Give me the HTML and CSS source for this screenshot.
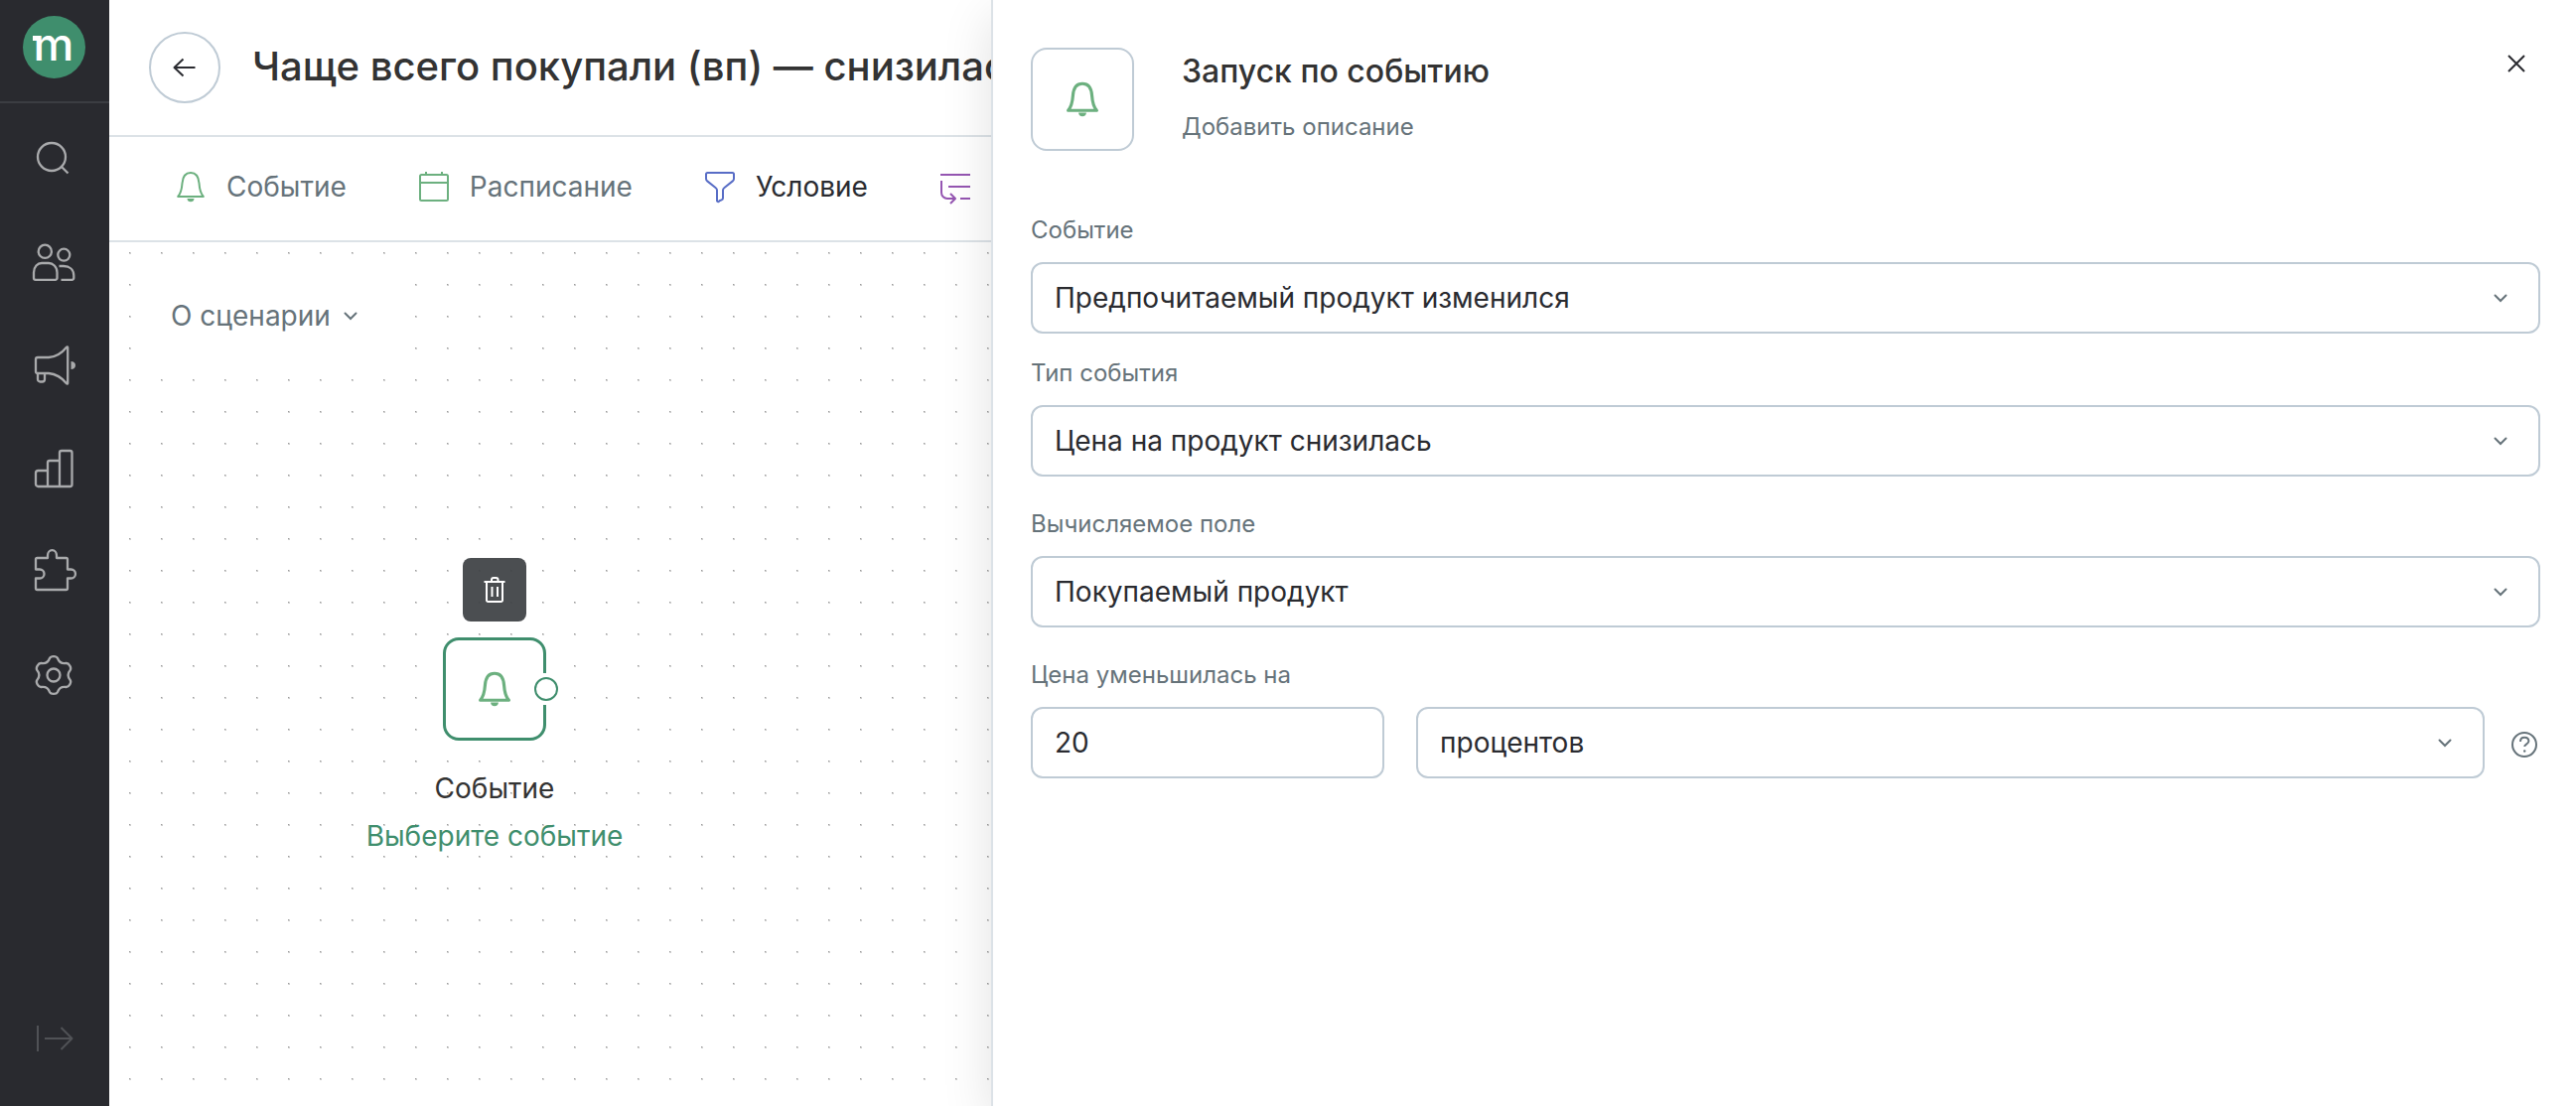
FILE: index.html
```html
<!DOCTYPE html>
<html lang="ru">
<head>
  <meta charset="utf-8">
  <meta name="viewport" content="width=device-width, initial-scale=1">
  <title>Редактор сценария</title>
  <link rel="stylesheet" href="styles.css">
</head>
<body>
  <svg class="sprite" aria-hidden="true">
    <symbol id="bell" viewBox="0 0 32 32">
      <path d="M3.200 26C5.800 23 7 20 7.500 12.500C8 6 11 2 16 2S24 6 24.500 12.500C25 20 26.200 23 28.800 26Z" fill="none" stroke="currentColor" stroke-linejoin="round"/>
      <path d="M12.500 28h7c0 2-1.500 3.300-3.500 3.300S12.500 30 12.500 28Z" fill="currentColor" stroke="none"/>
    </symbol>
    <symbol id="chevron" viewBox="0 0 24 24">
      <path d="M6.500 9.500 12 15l5.500-5.500" fill="none" stroke="currentColor" stroke-width="2" stroke-linecap="round"/>
    </symbol>
  </svg>

  <div class="app">
    <nav class="sidebar" aria-label="Разделы">
      <a class="brand" href="#" aria-label="Главная"><span class="logo">m</span></a>
      <div class="menu">
        <a class="menu-item" href="#" aria-label="Поиск">
          <svg class="menu-icon" viewBox="0 0 48 48"><circle cx="21" cy="22" r="14"/><path d="m31 32 6.500 6.500"/></svg>
        </a>
        <a class="menu-item" href="#" aria-label="Клиенты">
          <svg class="menu-icon" viewBox="0 0 48 48"><circle cx="14.300" cy="13.300" r="6.600"/><path d="M3 34.500C3 28.500 7 25 11 25h7c4 0 8.500 3.500 8.500 9.500V40a1.800 1.800 0 0 1-1.800 1.800H4.800A1.800 1.800 0 0 1 3 40Z"/><circle cx="33.300" cy="16.700" r="6"/><path d="M28.500 28h4.500c6 0 10.300 3.500 10.300 9.500V40a1.800 1.800 0 0 1-1.800 1.800H30.500"/></svg>
        </a>
        <a class="menu-item" href="#" aria-label="Кампании">
          <svg class="menu-icon" viewBox="0 0 48 48"><path d="M7 16h11c6-.5 13-4 18-10.300.6-.7 1.200-.3 1.200.3v36c0 .6-.6 1-1.200.3C31 36 24 32.500 18 32H7a2 2 0 0 1-2-2V18a2 2 0 0 1 2-2Z"/><path d="M7 32.500V38a2.500 2.500 0 0 0 2.500 2.500h2A2.500 2.500 0 0 0 14 38v-5.500"/><path class="solid" d="M40.500 20c2.500 0 4.500 1.500 4.500 4s-2 4-4.500 4Z"/></svg>
        </a>
        <a class="menu-item" href="#" aria-label="Отчеты">
          <svg class="menu-icon" viewBox="0 0 48 48"><path d="M17 42V18a2 2 0 0 1 2-2h10M29 42V8a2 2 0 0 1 2-2h8.500a2 2 0 0 1 2 2v32a2 2 0 0 1-2 2H7.500A2.500 2.500 0 0 1 5 39.500V28.500A2.500 2.500 0 0 1 7.500 26H17"/></svg>
        </a>
        <a class="menu-item" href="#" aria-label="Интеграции">
          <svg class="menu-icon" viewBox="0 0 48 48"><path d="M6.500 10H17V7.500a4 4.800 0 0 1 9 0V10h9.500A1.500 1.500 0 0 1 37 11.500V21.500h3.500a4.500 4.500 0 0 1 0 9H37v10a1.500 1.500 0 0 1-1.500 1.500h-29A1.500 1.500 0 0 1 5 40.500V30.500h4a4.500 4.500 0 0 0 0-9H5v-10A1.500 1.500 0 0 1 6.500 10Z"/></svg>
        </a>
        <a class="menu-item" href="#" aria-label="Настройки">
          <svg class="menu-icon" viewBox="0 0 48 48"><g transform="translate(23 24)"><circle r="6.500"/><path d="M-4-17C-2.800-19.500 2.800-19.500 4-17Q6.250-10.800 12.700-12C15.500-12.200 18.300-7.300 16.700-5Q12.500 0 16.700 5C18.300 7.300 15.500 12.200 12.700 12Q6.250 10.800 4 17C2.800 19.500-2.800 19.500-4 17Q-6.250 10.800-12.700 12C-15.500 12.200-18.300 7.300-16.700 5Q-12.500 0-16.700-5C-18.300-7.300-15.500-12.200-12.700-12Q-6.250-10.800-4-17Z"/></g></svg>
        </a>
      </div>
      <button class="expand" type="button" aria-label="Развернуть меню">
        <svg class="menu-icon" viewBox="0 0 48 48"><path d="M7 11v26M14 24h27M30.500 13 41.500 24l-11 11"/></svg>
      </button>
    </nav>

    <div class="workspace">
      <main class="editor">
        <header class="topbar">
          <button class="back" type="button" aria-label="Назад">
            <svg class="icon" viewBox="0 0 32 32"><path d="M26.500 16H5.500M14.500 7.500 5.500 16l9 8.500"/></svg>
          </button>
          <h1 class="title">Чаще всего покупали (вп) — снизилась</h1>
        </header>

        <div class="toolbar">
          <button class="tool" type="button"><svg class="icon green"><use href="#bell"/></svg>Событие</button>
          <button class="tool" type="button"><svg class="icon green" viewBox="0 0 32 32"><rect x="2" y="4" width="28" height="26" rx="1.500"/><path d="M2 12h28M8 1v3M24 1v3"/></svg>Расписание</button>
          <button class="tool active" type="button"><svg class="icon blue" viewBox="0 0 32 32"><path d="M3.500 2h25A1.500 1.500 0 0 1 30 3.500V8a3 3 0 0 1-1.200 2.400l-8.600 6.800A3 3 0 0 0 19 19.600V27.500a2 2 0 0 1-1.300 1.900l-2.300.9A1.200 1.200 0 0 1 13 29.500V19.600a3 3 0 0 0-1.200-2.400L3.200 10.400A3 3 0 0 1 2 8V3.500A1.500 1.500 0 0 1 3.500 2Z"/></svg>Условие</button>
          <button class="tool" type="button" aria-label="Ветвление"><svg class="icon purple" viewBox="0 0 32 32"><path d="M1 4h30M9 16h22M21 28h10M2 10v12a6 6 0 0 0 6 6h8M11 23l5 5-5 5"/></svg></button>
        </div>

        <section class="canvas" aria-label="Схема сценария">
          <button class="about" type="button">О сценарии<svg class="chevron"><use href="#chevron"/></svg></button>

          <div class="node">
            <button class="node-delete" type="button" aria-label="Удалить">
              <svg class="icon" viewBox="0 0 32 32"><path d="M5.500 8h21M13 8V6a2 2 0 0 1 2-2h2.500a2 2 0 0 1 2 2v2M8 8v18.500A1.500 1.500 0 0 0 9.500 28h13a1.500 1.500 0 0 0 1.500-1.500V8M13.500 13v10M19 13v10"/></svg>
            </button>
            <div class="node-box">
              <svg class="bell-large"><use href="#bell"/></svg>
              <span class="port"></span>
            </div>
            <div class="node-caption">
              <span class="node-name">Событие</span>
              <a class="node-link" href="#">Выберите событие</a>
            </div>
          </div>
        </section>
      </main>

      <aside class="panel">
        <header class="panel-head">
          <div class="panel-badge"><svg class="bell-large"><use href="#bell"/></svg></div>
          <div class="panel-heading">
            <h2 class="panel-title">Запуск по событию</h2>
            <button class="describe" type="button">Добавить описание</button>
          </div>
          <button class="close" type="button" aria-label="Закрыть">
            <svg class="icon" viewBox="0 0 32 32"><path d="m8 8 16 16M24 8 8 24"/></svg>
          </button>
        </header>

        <form class="form">
          <div class="group">
            <div class="field">
              <label class="label" for="event">Событие</label>
              <div class="select">
                <select class="control" id="event"><option>Предпочитаемый продукт изменился</option></select>
                <svg class="chevron"><use href="#chevron"/></svg>
              </div>
            </div>
            <div class="field">
              <label class="label" for="type">Тип события</label>
              <div class="select">
                <select class="control" id="type"><option>Цена на продукт снизилась</option></select>
                <svg class="chevron"><use href="#chevron"/></svg>
              </div>
            </div>
          </div>
          <div class="field">
            <label class="label" for="computed">Вычисляемое поле</label>
            <div class="select">
              <select class="control" id="computed"><option>Покупаемый продукт</option></select>
              <svg class="chevron"><use href="#chevron"/></svg>
            </div>
          </div>
          <div class="field">
            <label class="label" for="amount">Цена уменьшилась на</label>
            <div class="amount-row">
              <input class="control amount" id="amount" type="text" inputmode="numeric" value="20">
              <div class="unit">
                <div class="select">
                  <select class="control" aria-label="Единица измерения"><option>процентов</option></select>
                  <svg class="chevron"><use href="#chevron"/></svg>
                </div>
                <button class="help" type="button" aria-label="Справка">
                  <svg class="icon" viewBox="0 0 32 32"><circle cx="16" cy="18" r="12"/><path d="M12 15c0-2.500 1.800-4.200 4.200-4.200s4.200 1.500 4.200 3.800c0 2.800-4.200 2.600-4.200 5.400"/><circle class="solid" cx="16.200" cy="24.500" r="1.200"/></svg>
                </button>
              </div>
            </div>
          </div>
        </form>
      </aside>
    </div>
  </div>
</body>
</html>
```
FILE: styles.css
```css
:root {
  --ink: #2a2b30;
  --heading: #333333;
  --muted: #66737a;
  --line: #dce2e7;
  --border: #bfcbd5;
  --brand: #3f8e6d;
  --green: #6cb07f;
  --rail: #292a2f;
}

* {
  box-sizing: border-box;
}

body {
  margin: 0;
  font-family: Inter, "Liberation Sans", sans-serif;
  font-size: 28px;
  line-height: 40px;
  color: var(--ink);
  background: #fff;
}

button,
input,
select {
  font: inherit;
  color: inherit;
}

button {
  padding: 0;
  border: 0;
  background: none;
  cursor: pointer;
}

a {
  text-decoration: none;
}

h1,
h2 {
  margin: 0;
  font-weight: 500;
  color: var(--heading);
}

svg {
  display: block;
  flex: none;
}

.sprite {
  position: absolute;
  width: 0;
  height: 0;
}

.icon,
.menu-icon {
  width: 32px;
  height: 32px;
  fill: none;
  stroke: currentColor;
  stroke-width: 2;
  stroke-linecap: butt;
  stroke-linejoin: round;
  overflow: visible;
}

.menu-icon {
  width: 48px;
  height: 48px;
}

.menu .menu-icon {
  stroke-width: 2.3;
}

.solid {
  fill: currentColor;
  stroke: none;
}

.green {
  color: var(--green);
}

.blue {
  color: #586dc6;
}

.purple {
  color: #9556b2;
}

.chevron {
  width: 24px;
  height: 24px;
  color: var(--muted);
}

.bell-large {
  width: 36px;
  height: 36px;
  color: var(--green);
  stroke-width: 2.8;
}

.app {
  display: flex;
  min-height: 100vh;
}

/* Sidebar */

.sidebar {
  display: flex;
  flex: none;
  flex-direction: column;
  width: 110px;
  background: var(--rail);
  color: #a9aaac;
}

.brand {
  display: flex;
  justify-content: center;
  height: 104px;
  padding: 16px 2px 0 0;
  border-bottom: 2px solid #3b3d42;
}

.logo {
  position: relative;
  width: 63px;
  height: 63px;
  border-radius: 50%;
  background: var(--brand);
  color: #fff;
  font-size: 46px;
  font-weight: 500;
  line-height: 56px;
  text-align: center;
}

.logo::before {
  content: "";
  position: absolute;
  top: 20px;
  left: 10px;
  width: 6px;
  height: 5px;
  background: #fff;
}

.menu {
  display: flex;
  flex-direction: column;
  padding-top: 4px;
}

.menu-item {
  display: flex;
  align-items: center;
  justify-content: center;
  height: 104px;
  color: inherit;
}

.expand {
  display: flex;
  justify-content: center;
  margin-top: auto;
  padding-bottom: 44px;
  color: #505256;
}

/* Editor */

.workspace {
  position: relative;
  display: flex;
  flex: 1;
  min-width: 0;
  overflow: hidden;
}

.editor {
  display: flex;
  flex: 1;
  flex-direction: column;
  min-width: 0;
}

.topbar {
  display: flex;
  align-items: center;
  gap: 32px;
  height: 138px;
  padding: 0 40px;
  border-bottom: 2px solid var(--line);
}

.back {
  display: flex;
  flex: none;
  align-items: center;
  justify-content: center;
  width: 72px;
  height: 72px;
  border: 2px solid var(--border);
  border-radius: 50%;
}

.title {
  padding-bottom: 2px;
  font-size: 40px;
  line-height: 48px;
  white-space: nowrap;
}

.toolbar {
  display: flex;
  align-items: center;
  gap: 72px;
  height: 106px;
  padding: 0 66px 4px;
  border-bottom: 2px solid var(--line);
}

.tool {
  display: flex;
  align-items: center;
  gap: 20px;
  color: var(--muted);
}

.tool.active {
  color: var(--ink);
}

/* Dot grid: a dark pixel over a lighter 2px square, every 32px */
.canvas {
  position: relative;
  flex: 1;
  padding: 32px 40px;
  background: url("data:image/svg+xml,%3Csvg xmlns='http://www.w3.org/2000/svg' width='32' height='32'%3E%3Cpath fill='%23cfcfcf' d='M0 0h2v2H0z'/%3E%3Cpath fill='%239c9c9c' d='M0 0h1v1H0z'/%3E%3C/svg%3E") 20px 10px / 32px 32px;
}

.about {
  display: flex;
  align-items: center;
  gap: 8px;
  height: 84px;
  padding: 0 32px 0 22px;
  background: #fff;
  color: var(--muted);
}

.node {
  position: absolute;
  top: 318px;
  left: 228px;
  display: flex;
  flex-direction: column;
  align-items: center;
  width: 320px;
}

.node-delete {
  display: flex;
  align-items: center;
  justify-content: center;
  width: 64px;
  height: 64px;
  margin-bottom: 16px;
  border-radius: 8px;
  background: rgba(64, 67, 70, 0.94);
  color: #fff;
}

.node-box {
  position: relative;
  display: flex;
  align-items: center;
  justify-content: center;
  width: 104px;
  height: 104px;
  border: 3px solid var(--brand);
  border-radius: 16px;
  background: #fff;
}

.port {
  position: absolute;
  top: 33px;
  right: -19px;
  display: flex;
  align-items: center;
  justify-content: center;
  width: 32px;
  height: 32px;
  background: #fff;
}

.port::before {
  content: "";
  width: 20px;
  height: 20px;
  border: 2px solid var(--brand);
  border-radius: 50%;
}

.node-caption {
  display: flex;
  flex-direction: column;
  align-items: center;
  margin-top: 24px;
  line-height: 48px;
}

.node-name {
  color: var(--heading);
}

.node-link {
  color: var(--brand);
}

/* Settings panel */

.panel {
  position: absolute;
  top: 0;
  right: 0;
  bottom: 0;
  display: flex;
  flex-direction: column;
  gap: 64px;
  width: 64.25%;
  padding: 48px 36px 48px 38px;
  border-left: 2px solid var(--line);
  background: #fff;
  box-shadow: 0 16px 48px rgba(0, 0, 0, 0.12);
}

.panel-head {
  display: flex;
  align-items: flex-start;
  gap: 48px;
}

.panel-badge {
  display: flex;
  align-items: center;
  justify-content: center;
  width: 104px;
  height: 104px;
  border: 2px solid var(--border);
  border-radius: 16px;
}

.panel-heading {
  display: flex;
  flex: 1;
  flex-direction: column;
  align-items: flex-start;
  gap: 16px;
  padding-top: 4px;
}

.panel-title {
  font-size: 32px;
  line-height: 40px;
}

.describe {
  font-size: 24px;
  line-height: 40px;
  color: var(--muted);
}

.close {
  margin-right: 8px;
}

.form {
  display: flex;
  flex-direction: column;
  gap: 32px;
}

.group {
  display: flex;
  flex-direction: column;
  gap: 24px;
}

.field {
  display: flex;
  flex-direction: column;
  gap: 16px;
}

.label {
  font-size: 24px;
  line-height: 32px;
  color: var(--muted);
}

.select {
  display: grid;
  flex: 1;
  align-items: center;
}

.select > * {
  grid-area: 1 / 1;
}

.select .chevron {
  justify-self: end;
  margin-right: 28px;
  pointer-events: none;
}

.control {
  width: 100%;
  height: 72px;
  padding: 0 22px;
  border: 2px solid var(--border);
  border-radius: 12px;
  background: #fff;
  color: var(--ink);
  appearance: none;
}

.amount-row {
  display: flex;
  gap: 32px;
}

.amount {
  flex: none;
  width: 356px;
}

.unit {
  display: flex;
  flex: 1;
  align-items: center;
  gap: 24px;
}

.help {
  color: var(--muted);
}
```
